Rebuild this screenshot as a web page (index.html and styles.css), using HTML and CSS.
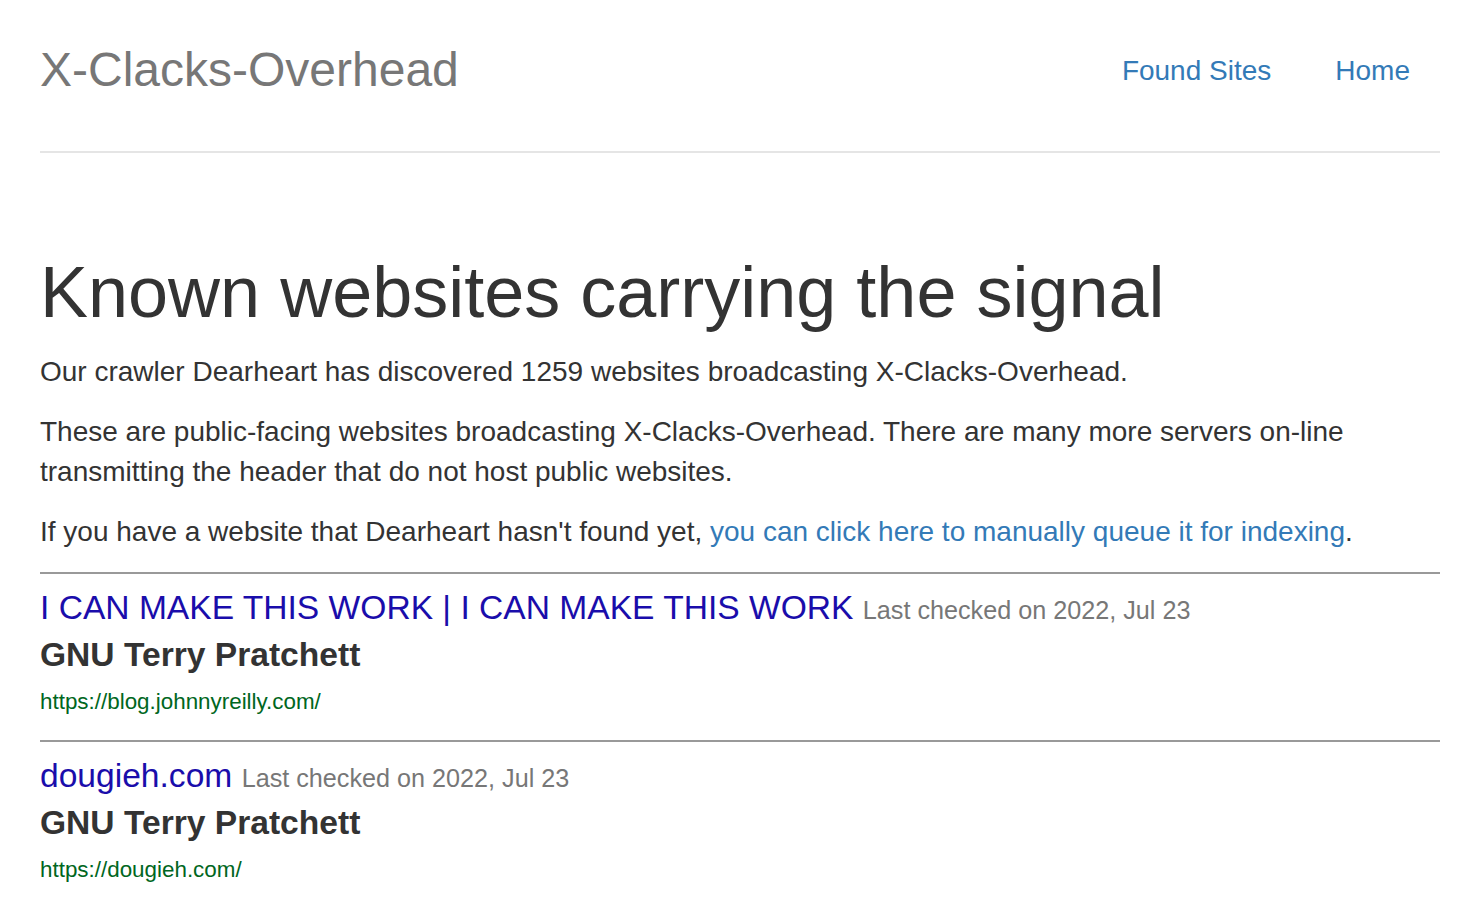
FILE: index.html
```html
<!DOCTYPE html>
<html lang="en">
<head>
<meta charset="utf-8">
<title>X-Clacks-Overhead</title>
<link rel="stylesheet" href="styles.css">
</head>
<body>
<div class="container">
  <header class="header">
    <div class="brand">X-Clacks-Overhead</div>
    <nav class="nav">
      <a href="#">Found Sites</a>
      <a href="#">Home</a>
    </nav>
  </header>
  <main class="main">
    <h1 class="title">Known websites carrying the signal</h1>
    <p>Our crawler Dearheart has discovered 1259 websites broadcasting X-Clacks-Overhead.</p>
    <p>These are public-facing websites broadcasting X-Clacks-Overhead. There are many more servers on-line transmitting the header that do not host public websites.</p>
    <p>If you have a website that Dearheart hasn't found yet, <a href="#" class="inline-link">you can click here to manually queue it for indexing</a>.</p>
    <div class="site">
      <div class="site-title"><a href="#">I CAN MAKE THIS WORK | I CAN MAKE THIS WORK</a> <span class="checked">Last checked on 2022, Jul 23</span></div>
      <div class="site-header">GNU Terry Pratchett</div>
      <div class="site-url">https://blog.johnnyreilly.com/</div>
    </div>
    <div class="site">
      <div class="site-title"><a href="#">dougieh.com</a> <span class="checked">Last checked on 2022, Jul 23</span></div>
      <div class="site-header">GNU Terry Pratchett</div>
      <div class="site-url">https://dougieh.com/</div>
    </div>
  </main>
</div>
</body>
</html>
```
FILE: styles.css
```css
html, body {
  margin: 0;
  padding: 0;
  background: #fff;
}
body {
  font-family: "Liberation Sans", Arial, sans-serif;
  color: #333;
}
.container {
  width: 1400px;
  margin-left: 40px;
}
.header {
  display: flex;
  justify-content: space-between;
  align-items: flex-start;
  height: 151px;
  border-bottom: 2px solid #e5e5e5;
}
.brand {
  font-size: 48px;
  color: #777;
  margin-top: 42px;
  line-height: 56px;
}
.nav {
  display: flex;
  gap: 64px;
  margin-top: 53px;
  margin-right: 30px;
}
.nav a {
  font-size: 28px;
  line-height: 36px;
  color: #337ab7;
  text-decoration: none;
}
.main {
  padding-top: 99px;
}
.title {
  font-size: 72px;
  font-weight: normal;
  line-height: 80px;
  margin: 0 0 20px;
  color: #333;
}
.main p {
  font-size: 28px;
  line-height: 40px;
  margin: 0 0 20px;
}
.inline-link {
  color: #337ab7;
  text-decoration: none;
}
.site {
  border-top: 2px solid #999;
  height: 152px;
  padding-top: 14px;
  box-sizing: content-box;
}
.site-title {
  font-size: 33.6px;
  line-height: 40px;
}
.site-title a {
  color: #1a0dab;
  text-decoration: none;
}
.checked {
  font-size: 25.2px;
  color: #777;
}
.site-header {
  font-size: 33.6px;
  font-weight: bold;
  line-height: 48px;
  margin-top: 1px;
}
.site-url {
  font-size: 22.4px;
  line-height: 40px;
  margin-top: 3px;
  color: #006621;
}
```
